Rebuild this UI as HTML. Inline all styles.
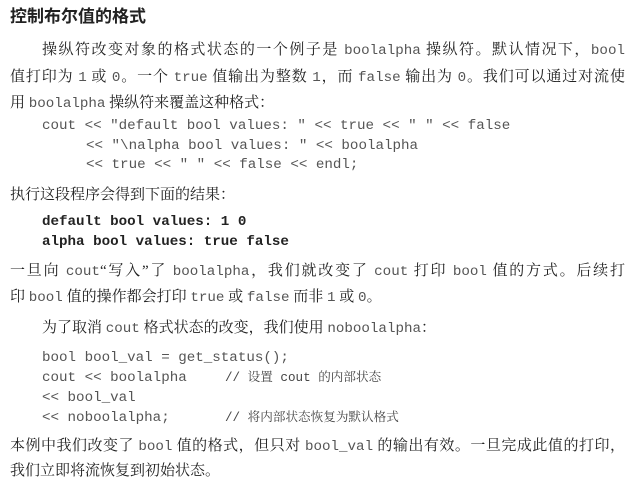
<!DOCTYPE html>
<html><head><meta charset="utf-8"><style>
body{margin:0;width:640px;height:491px;background:#fff;position:relative;overflow:hidden;font-family:"Liberation Serif","Noto Serif CJK SC","Noto Sans CJK SC",serif;color:#222}
.l{position:absolute;white-space:nowrap;font-size:15px;line-height:18px}
.j{text-align:justify;text-align-last:justify;white-space:normal}
.m{font-family:"Liberation Mono",monospace;color:#555;font-size:14.2px}
.c{position:absolute;white-space:pre;font-family:"Liberation Mono",monospace;color:#555;font-size:14.2px;line-height:18px}
.b{position:absolute;white-space:pre;font-family:"Liberation Mono",monospace;font-weight:bold;color:#222;font-size:14.2px;line-height:18px}
.cm{font-family:"Liberation Mono","Noto Serif CJK SC",monospace;font-size:12.6px;color:#444}
</style></head><body>
<div class="l" style="left:10px;top:8px;font-size:17px;font-weight:bold;font-family:'Liberation Sans','Noto Sans CJK SC',sans-serif">控制布尔值的格式</div>
<div class="l j" style="left:42px;top:41px;width:583px">操纵符改变对象的格式状态的一个例子是 <span class="m">boolalpha</span> 操纵符。默认情况下，<span class="m">bool</span></div>
<div class="l j" style="left:10px;top:68px;width:615px">值打印为 <span class="m">1</span> 或 <span class="m">0</span>。一个 <span class="m">true</span> 值输出为整数 <span class="m">1</span>，而 <span class="m">false</span> 输出为 <span class="m">0</span>。我们可以通过对流使</div>
<div class="l" style="left:10px;top:94px">用 <span class="m">boolalpha</span> 操纵符来覆盖这种格式：</div>
<div class="c" style="left:42px;top:117px">cout &lt;&lt; "default bool values: " &lt;&lt; true &lt;&lt; " " &lt;&lt; false</div>
<div class="c" style="left:86px;top:137px">&lt;&lt; "\nalpha bool values: " &lt;&lt; boolalpha</div>
<div class="c" style="left:86px;top:156px">&lt;&lt; true &lt;&lt; " " &lt;&lt; false &lt;&lt; endl;</div>
<div class="l" style="left:10px;top:186px">执行这段程序会得到下面的结果：</div>
<div class="b" style="left:42px;top:213px">default bool values: 1 0</div>
<div class="b" style="left:42px;top:233px">alpha bool values: true false</div>
<div class="l j" style="left:10px;top:262px;width:615px">一旦向 <span class="m">cout</span>“写入”了 <span class="m">boolalpha</span>，我们就改变了 <span class="m">cout</span> 打印 <span class="m">bool</span> 值的方式。后续打</div>
<div class="l" style="left:10px;top:288px">印 <span class="m">bool</span> 值的操作都会打印 <span class="m">true</span> 或 <span class="m">false</span> 而非 <span class="m">1</span> 或 <span class="m">0</span>。</div>
<div class="l" style="left:42px;top:319px">为了取消 <span class="m">cout</span> 格式状态的改变，我们使用 <span class="m">noboolalpha</span>：</div>
<div class="c" style="left:42px;top:349px">bool bool_val = get_status();</div>
<div class="c" style="left:42px;top:369px">cout &lt;&lt; boolalpha</div>
<div class="c cm" style="left:225px;top:369px">// 设置 cout 的内部状态</div>
<div class="c" style="left:42px;top:389px">&lt;&lt; bool_val</div>
<div class="c" style="left:42px;top:409px">&lt;&lt; noboolalpha;</div>
<div class="c cm" style="left:225px;top:409px">// 将内部状态恢复为默认格式</div>
<div class="l j" style="left:10px;top:437px;width:615px">本例中我们改变了 <span class="m">bool</span> 值的格式，但只对 <span class="m">bool_val</span> 的输出有效。一旦完成此值的打印，</div>
<div class="l" style="left:10px;top:462px">我们立即将流恢复到初始状态。</div>
</body></html>
